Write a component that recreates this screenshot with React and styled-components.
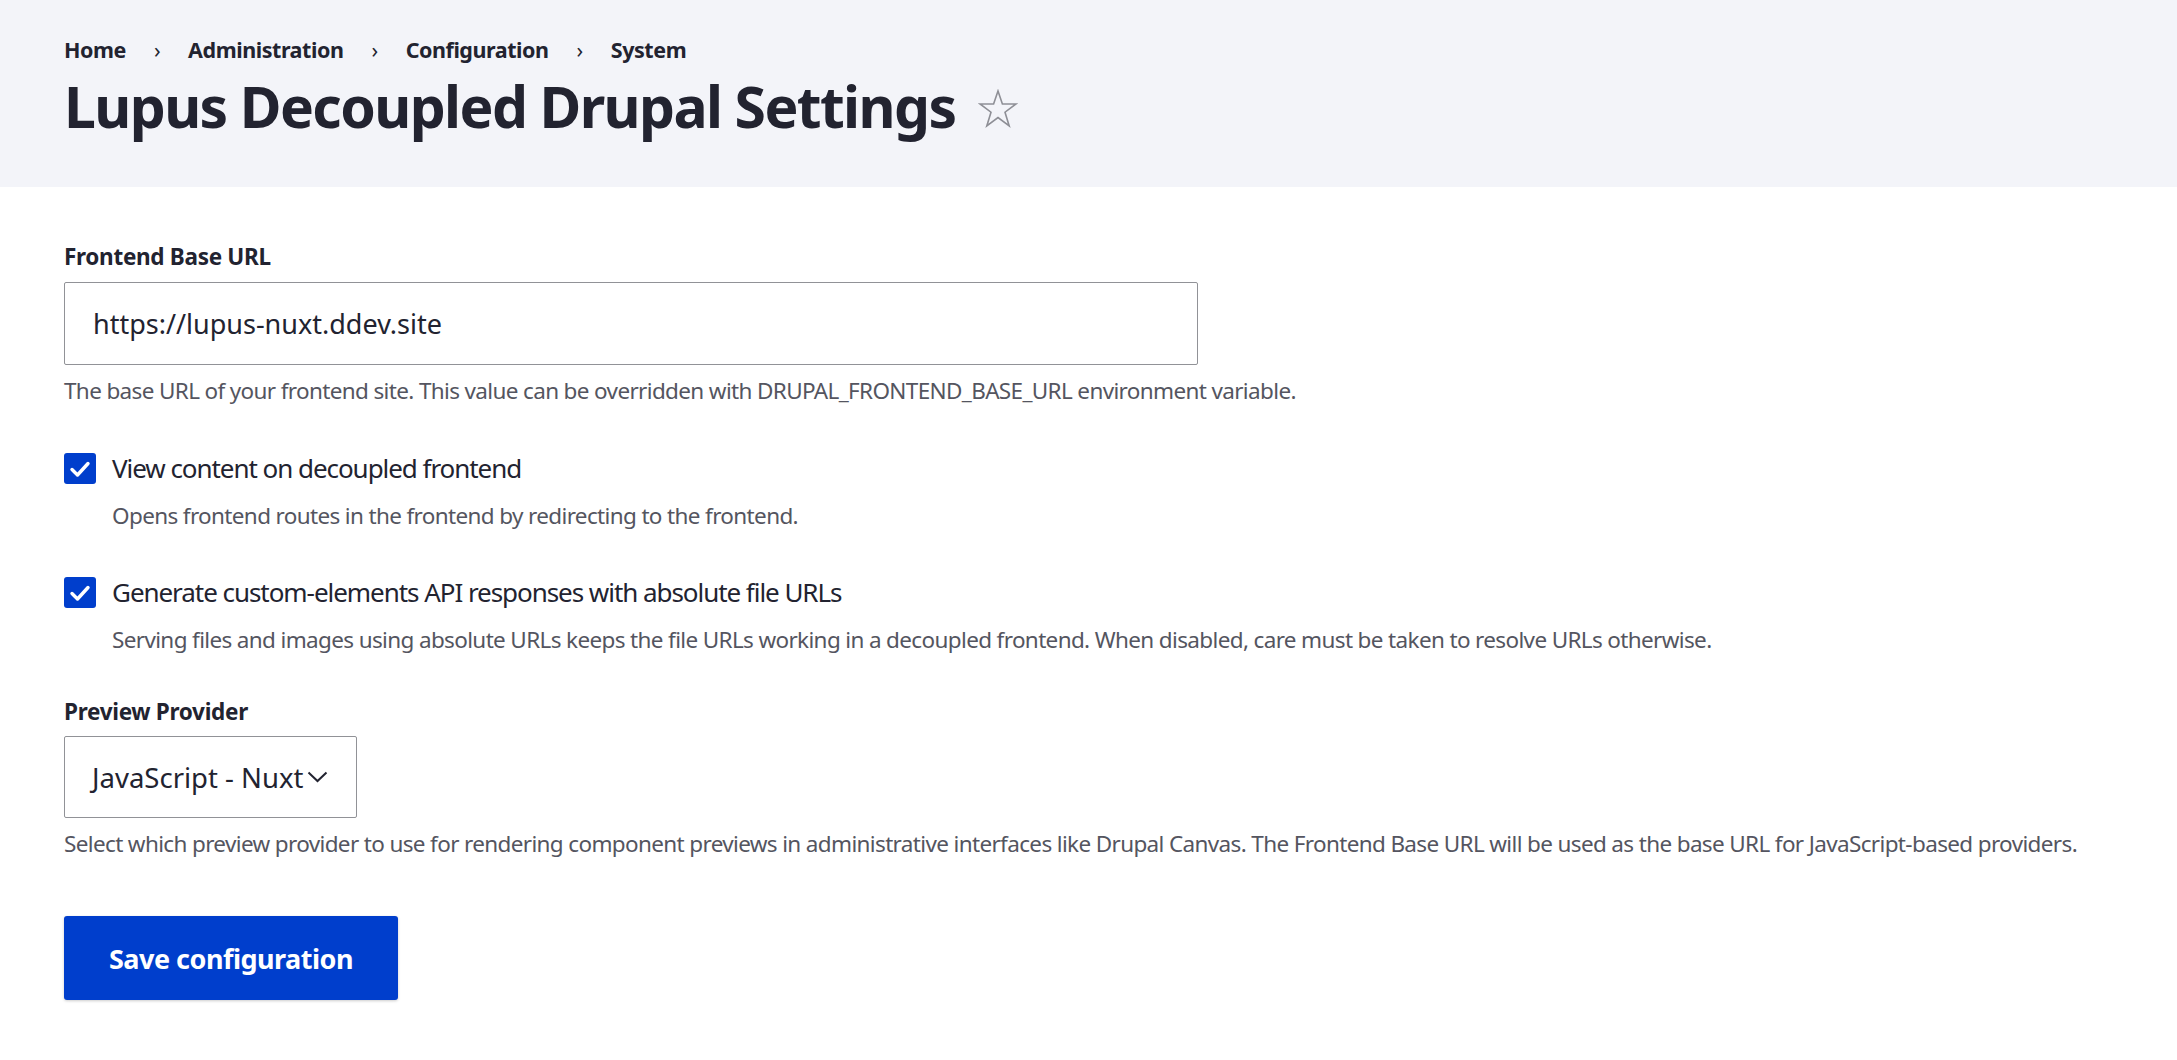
import React from 'react'
import styled, { createGlobalStyle } from 'styled-components'

const GlobalStyle = createGlobalStyle`
  body {
    margin: 0;
    background: #fff;
    color: #222330;
    font-family: "Noto Sans", "Open Sans", sans-serif;
  }
`

const Header = styled.header`
  box-sizing: border-box;
  height: 187px;
  padding: 34px 64px 0;
  background: #f3f4f9;
`

const Crumbs = styled.ol`
  display: flex;
  align-items: center;
  margin: 0;
  padding: 0;
  list-style: none;
  font-size: 21.5px;
  line-height: 32px;
  font-weight: 700;
  letter-spacing: -0.45px;
`

const Crumb = styled.li`
  display: flex;
  align-items: center;

  & + &::before {
    content: "›";
    margin: 0 28px;
    font-weight: 400;
  }
`

const TitleRow = styled.div`
  display: flex;
  align-items: center;
  gap: 23px;
  margin-top: 5px;
`

const Title = styled.h1`
  margin: 0;
  font-size: 57px;
  line-height: 70px;
  font-weight: 700;
  letter-spacing: -1.6px;
`

const Star = styled.svg`
  width: 40px;
  height: 40px;
  margin-top: 6px;
`

const Main = styled.main`
  padding: 55px 64px 40px;
`

const Label = styled.label`
  display: block;
  font-size: 22.5px;
  line-height: 30px;
  font-weight: 700;
  letter-spacing: -0.3px;
`

const TextInput = styled.input`
  display: block;
  box-sizing: border-box;
  width: 1134px;
  height: 83px;
  margin-top: 10px;
  padding: 0 28px;
  border: 1px solid #919297;
  border-radius: 2px;
  font: inherit;
  font-size: 27px;
  color: #222330;
  background: #fff;
`

const Description = styled.div`
  margin-top: ${p => p.$top || 11}px;
  padding-left: ${p => (p.$indent ? 48 : 0)}px;
  font-size: 22.5px;
  line-height: 30px;
  letter-spacing: -0.64px;
  color: #545560;
  white-space: nowrap;
`

const CheckItem = styled.div`
  margin-top: ${p => p.$top}px;
`

const CheckRow = styled.label`
  display: flex;
  align-items: flex-start;
  gap: 16px;
  font-size: 26px;
  line-height: 36px;
  letter-spacing: -1.05px;
`

const Box = styled.span`
  flex: none;
  display: flex;
  align-items: center;
  justify-content: center;
  width: 32px;
  height: 31px;
  margin-top: 3px;
  border-radius: 3px;
  background: #003ecc;
`

const Field = styled.div`
  margin-top: ${p => p.$top}px;
`

const Select = styled.div`
  box-sizing: border-box;
  display: flex;
  align-items: center;
  width: 293px;
  height: 82px;
  margin-top: 9px;
  padding: 0 0 0 27px;
  border: 1px solid #919297;
  border-radius: 2px;
  font-size: 27.5px;
  white-space: nowrap;
`

const Chevron = styled.svg`
  flex: none;
  width: 21px;
  height: 12px;
  margin-left: 4px;
`

const SaveButton = styled.button`
  display: block;
  box-sizing: border-box;
  width: 334px;
  height: 84px;
  margin-top: 57px;
  border: 0;
  border-radius: 3px;
  background: #003ecc;
  color: #fff;
  font: inherit;
  font-size: 27px;
  font-weight: 700;
  letter-spacing: -0.5px;
  box-shadow: 0 1px 3px rgba(0, 0, 0, 0.2);
  cursor: pointer;
`

function Check() {
  return (
    <Box>
      <svg width="22" height="18" viewBox="0 0 22 18">
        <path d="M3 9.5 L8.5 15 L19 3.5" fill="none" stroke="#fff" strokeWidth="3.4" strokeLinecap="round" strokeLinejoin="round" />
      </svg>
    </Box>
  )
}

export default function App() {
  return (
    <>
      <GlobalStyle />
      <Header>
        <Crumbs>
          <Crumb>Home</Crumb>
          <Crumb>Administration</Crumb>
          <Crumb>Configuration</Crumb>
          <Crumb>System</Crumb>
        </Crumbs>
        <TitleRow>
          <Title>Lupus Decoupled Drupal Settings</Title>
          <Star viewBox="0 0 40 40">
            <path
              d="M20 2 L24.4 15 L38 15 L27 23.2 L31.2 37 L20 28.6 L8.8 37 L13 23.2 L2 15 L15.6 15 Z"
              fill="none"
              stroke="#8e8f96"
              strokeWidth="1.6"
              strokeLinejoin="miter"
            />
          </Star>
        </TitleRow>
      </Header>
      <Main>
        <Field $top={0}>
          <Label htmlFor="base-url">Frontend Base URL</Label>
          <TextInput id="base-url" defaultValue="https://lupus-nuxt.ddev.site" />
          <Description>
            The base URL of your frontend site. This value can be overridden with DRUPAL_FRONTEND_BASE_URL environment variable.
          </Description>
        </Field>

        <CheckItem $top={44}>
          <CheckRow>
            <Check />
            View content on decoupled frontend
          </CheckRow>
          <Description $indent $top={15}>
            Opens frontend routes in the frontend by redirecting to the frontend.
          </Description>
        </CheckItem>

        <CheckItem $top={43}>
          <CheckRow>
            <Check />
            Generate custom-elements API responses with absolute file URLs
          </CheckRow>
          <Description $indent $top={15}>
            Serving files and images using absolute URLs keeps the file URLs working in a decoupled frontend. When disabled, care must be taken to resolve URLs otherwise.
          </Description>
        </CheckItem>

        <Field $top={42}>
          <Label>Preview Provider</Label>
          <Select>
            JavaScript - Nuxt
            <Chevron viewBox="0 0 21 12">
              <path d="M1.5 1.5 L10.5 10 L19.5 1.5" fill="none" stroke="#222330" strokeWidth="2" />
            </Chevron>
          </Select>
          <Description>
            Select which preview provider to use for rendering component previews in administrative interfaces like Drupal Canvas. The Frontend Base URL will be used as the base URL for JavaScript-based providers.
          </Description>
        </Field>

        <SaveButton type="button">Save configuration</SaveButton>
      </Main>
    </>
  )
}
